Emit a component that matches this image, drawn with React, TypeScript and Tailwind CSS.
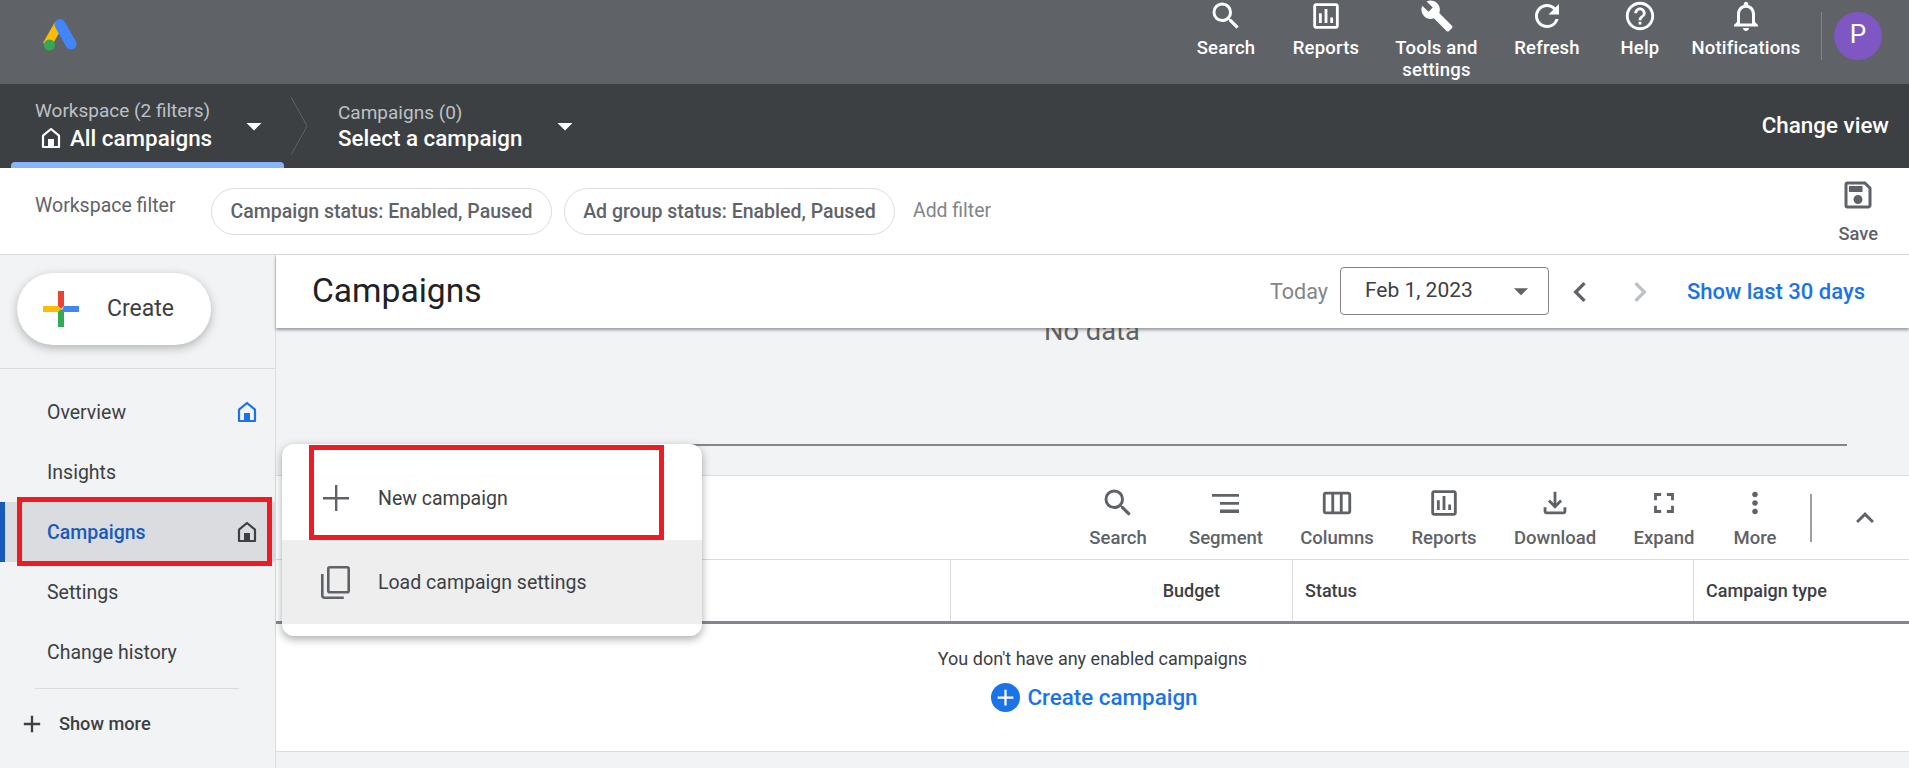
import type { ReactNode } from 'react';
import {
  MdAdd,
  MdArrowDropDown,
  MdBuild,
  MdChevronLeft,
  MdChevronRight,
  MdExpandLess,
  MdFullscreen,
  MdHelpOutline,
  MdMoreVert,
  MdNotificationsNone,
  MdOutlineAssessment,
  MdOutlineFileDownload,
  MdOutlineSave,
  MdOutlineViewWeek,
  MdRefresh,
  MdSearch,
} from 'react-icons/md';

function HomeIcon({ className }: { className: string }) {
  return (
    <svg viewBox="0 0 24 24" className={className} fill="none">
      <path d="M12 3 4 9.6V21h16V9.6L12 3Z" stroke="currentColor" strokeWidth="2.2" strokeLinejoin="round" />
      <path d="M9 13h6v8H9z" fill="currentColor" />
    </svg>
  );
}

function AdsLogo() {
  return (
    <svg viewBox="0 0 36 36" className="h-[36px] w-[36px]">
      <path d="M17 6 5 27" stroke="#fbbc04" strokeWidth="9" strokeLinecap="butt" />
      <path d="M18 6.5 29 26" stroke="#4285f4" strokeWidth="11" strokeLinecap="round" />
      <circle cx="7.5" cy="27" r="5.5" fill="#34a853" />
    </svg>
  );
}

function GooglePlus() {
  return (
    <svg viewBox="0 0 36 36" className="h-[36px] w-[36px]">
      <path d="M15 0h6v15l-3 3-3-3z" fill="#ea4335" />
      <path d="M0 15h15l3 3-3 3H0z" fill="#fbbc04" />
      <path d="M21 15h15v6H18z" fill="#4285f4" />
      <path d="M15 21l3-3 3 3v15h-6z" fill="#34a853" />
    </svg>
  );
}

function SegmentIcon() {
  return (
    <svg viewBox="0 0 28 28" className="h-[28px] w-[28px]" fill="currentColor">
      <path d="M0 5h27v2.8H0zM8 13h19v2.8H8zM8 20.5h19v3.4H8z" />
    </svg>
  );
}

function ThinPlus() {
  return (
    <svg viewBox="0 0 26 26" className="h-[26px] w-[26px] text-[#5f6368]" fill="currentColor">
      <path d="M12 0h2.4v26H12zM0 12h26v2.4H0z" />
    </svg>
  );
}

function LoadIcon() {
  return (
    <svg viewBox="0 0 29 33" className="h-[33px] w-[29px] text-[#5f6368]" fill="none" stroke="currentColor" strokeWidth="2.6">
      <rect x="7.3" y="1.3" width="20.4" height="25" rx="1.5" />
      <path d="M1.3 8v21.2c0 1.4 1 2.5 2.5 2.5h19" />
    </svg>
  );
}

function TopAction({ label, width, icon }: { label: ReactNode; width: string; icon: ReactNode }) {
  return (
    <div className={`flex h-[84px] flex-col items-center ${width}`}>
      <div className="flex h-[31px] items-center justify-center text-white">{icon}</div>
      <div className="mt-[6px] text-center text-[18.5px] leading-[22px] font-medium tracking-[0.2px] text-white">{label}</div>
    </div>
  );
}

function ToolAction({ label, width, icon }: { label: string; width: string; icon: ReactNode }) {
  return (
    <div className={`flex flex-col items-center text-[#5f6368] ${width}`}>
      <div className="flex h-[34px] items-center justify-center">{icon}</div>
      <div className="mt-[7px] text-[18.5px] leading-[22px] font-medium">{label}</div>
    </div>
  );
}

function NavItem({ label, active, home }: { label: string; active?: boolean; home?: string }) {
  return (
    <div className={`relative flex h-[60px] items-center justify-between pr-[16px] pl-[47px] ${active ? 'bg-[#dadce0]' : ''}`}>
      {active && <div className="absolute top-0 bottom-0 left-0 w-[5px] bg-[#185abc]" />}
      <span className={`pt-[1px] text-[19.5px] ${active ? 'font-medium text-[#185abc]' : 'text-[#3c4043]'}`}>{label}</span>
      {home && <HomeIcon className={`h-[24px] w-[24px] ${home}`} />}
    </div>
  );
}

export default function App() {
  return (
    <div className="relative flex h-[768px] w-[1909px] flex-col overflow-hidden bg-[#f1f3f4] font-['Roboto',sans-serif]">
      {/* top bar */}
      <div className="flex h-[84px] shrink-0 items-start bg-[#5f6368] pr-[27px] pl-[42px]">
        <div className="mt-[18px]">
          <AdsLogo />
        </div>
        <div className="ml-auto flex items-start">
          <TopAction label="Search" width="w-[100px]" icon={<MdSearch size={36} />} />
          <TopAction label="Reports" width="w-[100px]" icon={<MdOutlineAssessment size={34} />} />
          <TopAction label={<>Tools and<br />settings</>} width="w-[121px]" icon={<MdBuild size={34} />} />
          <TopAction label="Refresh" width="w-[100px]" icon={<MdRefresh size={36} />} />
          <TopAction label="Help" width="w-[86px]" icon={<MdHelpOutline size={34} />} />
          <TopAction label="Notifications" width="w-[126px]" icon={<MdNotificationsNone size={36} />} />
          <div className="mt-[12px] ml-[12px] h-[48px] w-px bg-[#80868b]" />
          <div className="mt-[12px] ml-[12px] flex h-[48px] w-[48px] items-center justify-center rounded-full bg-[#7e57c2] pb-[4px] text-[26px] text-white">P</div>
        </div>
      </div>

      {/* workspace / campaign picker */}
      <div className="relative flex h-[84px] shrink-0 items-center bg-[#3c4043] pr-[20px]">
        <div className="ml-[35px] w-[209px]">
          <div className="text-[19px] leading-[20px] text-[#bdc1c6]">Workspace (2 filters)</div>
          <div className="mt-[4px] flex items-center gap-[7px] text-[22.4px] leading-[26px] font-medium text-white">
            <HomeIcon className="ml-[4px] h-[26px] w-[24px]" />
            All campaigns
          </div>
        </div>
        <MdArrowDropDown size={36} className="-ml-[8px] text-white" />
        <svg viewBox="0 0 16 58" className="ml-[19px] h-[58px] w-[16px]" fill="none">
          <path d="M0 0 16 29 0 58" stroke="#5f6368" strokeWidth="1" />
        </svg>
        <div className="ml-[31px] w-[217px]">
          <div className="mt-[2px] text-[19px] leading-[20px] text-[#bdc1c6]">Campaigns (0)</div>
          <div className="mt-[2px] text-[22.4px] leading-[26px] font-medium text-white">Select a campaign</div>
        </div>
        <MdArrowDropDown size={36} className="-ml-[8px] text-white" />
        <div className="ml-auto text-[22.4px] font-medium text-white">Change view</div>
        <div className="absolute bottom-0 left-[11px] h-[6px] w-[273px] rounded-t-[4px] bg-[#8ab4f8]" />
      </div>

      {/* workspace filter row */}
      <div className="flex h-[87px] shrink-0 items-start border-b border-[#dadce0] bg-white pr-[31px] pl-[35px]">
        <div className="mt-[27px] w-[176px] text-[19.5px] leading-[22px] text-[#5f6368]">Workspace filter</div>
        <div className="mt-[20px] flex h-[47px] w-[341px] items-center justify-center rounded-full border border-[#dadce0] text-[19.5px] font-medium text-[#5f6368]">Campaign status: Enabled, Paused</div>
        <div className="mt-[20px] ml-[12px] flex h-[47px] w-[331px] items-center justify-center rounded-full border border-[#dadce0] text-[19.5px] font-medium text-[#5f6368]">Ad group status: Enabled, Paused</div>
        <div className="mt-[31px] ml-[18px] text-[19.4px] leading-[24px] text-[#80868b]">Add filter</div>
        <div className="mt-[9px] ml-auto flex flex-col items-center text-[#5f6368]">
          <MdOutlineSave size={36} />
          <div className="mt-[10px] text-[18.3px] leading-[22px] font-medium">Save</div>
        </div>
      </div>

      <div className="flex min-h-0 flex-1">
        {/* sidebar */}
        <aside className="w-[276px] shrink-0 border-r border-[#dadce0]">
          <div className="flex h-[114px] items-start border-b border-[#dadce0] pt-[18px] pl-[17px]">
            <div className="flex h-[72px] w-[194px] items-center gap-[28px] rounded-full bg-white pl-[26px] text-[23px] text-[#3c4043] shadow-[0_3px_10px_rgba(60,64,67,0.35)]">
              <GooglePlus />
              <span className="pt-[1px]">Create</span>
            </div>
          </div>
          <div className="pt-[13px]">
            <NavItem label="Overview" home="text-[#1a73e8]" />
            <NavItem label="Insights" />
            <NavItem label="Campaigns" active home="text-[#3c4043]" />
            <NavItem label="Settings" />
            <NavItem label="Change history" />
          </div>
          <div className="mx-[35px] mt-[6px] h-px w-[204px] bg-[#dadce0]" />
          <div className="mt-[21px] flex items-center pl-[18px] text-[#3c4043]">
            <MdAdd size={28} />
            <span className="ml-[13px] text-[18.2px] font-medium">Show more</span>
          </div>
        </aside>

        {/* main */}
        <main className="min-w-0 flex-1">
          <div className="relative z-10 flex h-[73px] items-center bg-white pr-[44px] pl-[36px] shadow-[0_2px_3px_rgba(60,64,67,0.5)]">
            <h1 className="-mt-[1px] text-[33.6px] text-[#202124]">Campaigns</h1>
            <div className="ml-auto pt-[1px] text-[21.5px] text-[#80868b]">Today</div>
            <div className="-mt-[1px] ml-[12px] flex h-[48px] w-[209px] items-center justify-between rounded-[4px] border border-[#80868b] pr-[18px] pl-[24px] text-[21px] text-[#3c4043]">
              Feb 1, 2023
              <MdArrowDropDown size={34} className="-mr-[8px] text-[#5f6368]" />
            </div>
            <MdChevronLeft size={40} className="ml-[11px] text-[#5f6368]" />
            <MdChevronRight size={40} className="ml-[20px] text-[#bdc1c6]" />
            <div className="ml-[27px] text-[22px] font-medium text-[#1a73e8]">Show last 30 days</div>
          </div>

          <div className="relative h-[147px] overflow-hidden">
            <div className="absolute -top-[14px] left-[768px] text-[27.3px] leading-[34px] text-[#5f6368]">No data</div>
            <div className="absolute top-[116px] right-[62px] left-[415px] h-[2px] bg-[#80868b]" />
          </div>

          <section className="border-y border-[#dadce0] bg-white">
            <div className="flex h-[84px] items-start justify-end border-b border-[#dadce0] pt-[10px]">
              <ToolAction label="Search" width="w-[100px]" icon={<MdSearch size={36} />} />
              <ToolAction label="Segment" width="w-[116px]" icon={<SegmentIcon />} />
              <ToolAction label="Columns" width="w-[106px]" icon={<MdOutlineViewWeek size={34} />} />
              <ToolAction label="Reports" width="w-[108px]" icon={<MdOutlineAssessment size={34} />} />
              <ToolAction label="Download" width="w-[114px]" icon={<MdOutlineFileDownload size={34} />} />
              <ToolAction label="Expand" width="w-[104px]" icon={<MdFullscreen size={34} />} />
              <ToolAction label="More" width="w-[78px]" icon={<MdMoreVert size={34} />} />
              <div className="mt-[8px] ml-[16px] h-[48px] w-[2px] bg-[#9aa0a6]" />
              <MdExpandLess size={36} className="mt-[14px] mr-[26px] ml-[35px] text-[#5f6368]" />
            </div>
            <div className="flex h-[64px] border-b-[3px] border-[#80868b] text-[18px] font-medium text-[#3c4043]">
              <div className="w-[675px] border-r border-[#dadce0]" />
              <div className="flex w-[342px] items-center justify-end border-r border-[#dadce0] pr-[72px]">Budget</div>
              <div className="flex w-[401px] items-center border-r border-[#dadce0] pl-[12px]">Status</div>
              <div className="flex flex-1 items-center pl-[12px]">Campaign type</div>
            </div>
            <div className="flex h-[127px] flex-col items-center pt-[24px]">
              <div className="text-[18px] leading-[22px] text-[#3c4043]">You don't have any enabled campaigns</div>
              <div className="mt-[12px] flex items-center gap-[7px] pl-[4px] text-[22.4px] leading-[30px] font-medium text-[#1a73e8]">
                <span className="flex h-[29px] w-[29px] items-center justify-center rounded-full bg-[#1a73e8] text-white">
                  <MdAdd size={27} />
                </span>
                Create campaign
              </div>
            </div>
          </section>
        </main>
      </div>

      {/* red annotation around the Campaigns nav item */}
      <div className="absolute top-[497px] left-[17px] h-[69px] w-[255px] border-[5px] border-[#ed1c24]" />

      {/* new campaign menu */}
      <div className="absolute top-[444px] left-[282px] z-20 h-[192px] w-[420px] overflow-hidden rounded-[12px] bg-white shadow-[0_3px_8px_rgba(60,64,67,0.45)]">
        <div className="flex h-[96px] items-center pt-[12px] pl-[41px] text-[19.5px] text-[#3c4043]">
          <ThinPlus />
          <span className="ml-[29px] pt-[1px]">New campaign</span>
        </div>
        <div className="flex h-[84px] items-center bg-[#eeeeee] pl-[39px] text-[19.5px] text-[#3c4043]">
          <LoadIcon />
          <span className="ml-[28px] pt-[2px]">Load campaign settings</span>
        </div>
        <div className="absolute top-[1px] left-[27px] h-[95px] w-[355px] border-[5px] border-[#ed1c24]" />
      </div>
    </div>
  );
}
